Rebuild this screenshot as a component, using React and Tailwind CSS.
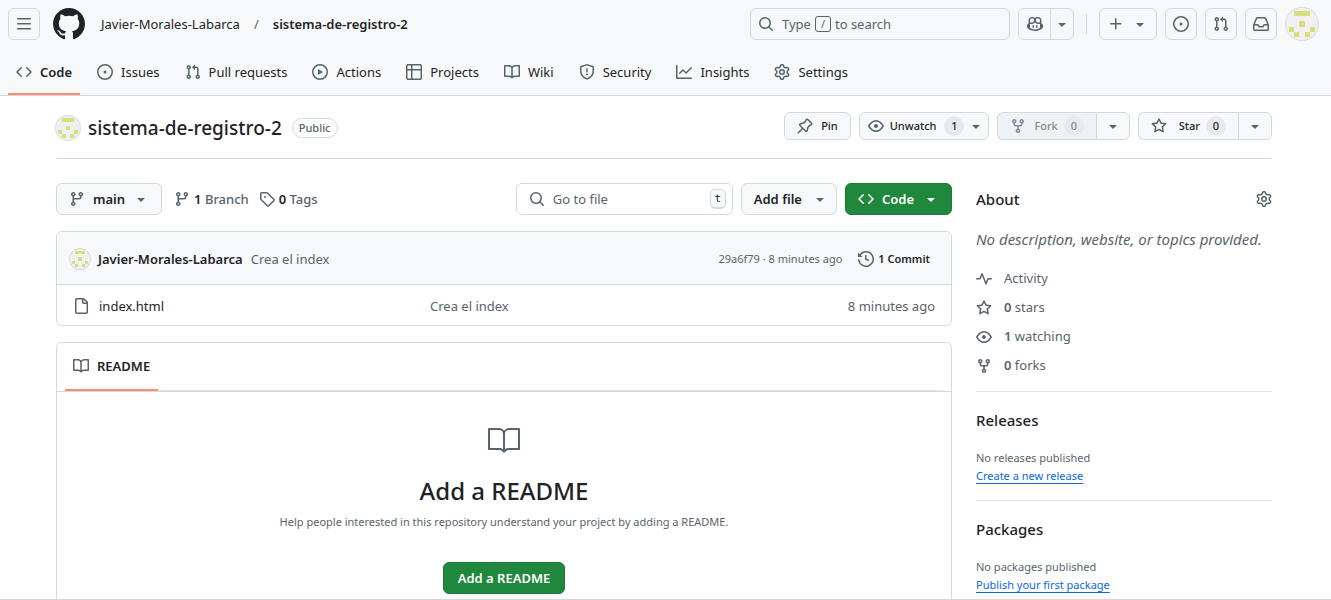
import { GoBook } from "react-icons/go";

const PATHS = {
  bars: "M1 2.75A.75.75 0 0 1 1.75 2h12.5a.75.75 0 0 1 0 1.5H1.75A.75.75 0 0 1 1 2.75Zm0 5A.75.75 0 0 1 1.75 7h12.5a.75.75 0 0 1 0 1.5H1.75A.75.75 0 0 1 1 7.75ZM1.75 12h12.5a.75.75 0 0 1 0 1.5H1.75a.75.75 0 0 1 0-1.5Z",
  github:
    "M8 0c4.42 0 8 3.58 8 8a8.013 8.013 0 0 1-5.45 7.59c-.4.08-.55-.17-.55-.38 0-.27.01-1.13.01-2.2 0-.75-.25-1.23-.54-1.48 1.78-.2 3.65-.88 3.65-3.95 0-.88-.31-1.59-.82-2.15.08-.2.36-1.02-.08-2.12 0 0-.67-.22-2.2.82-.64-.18-1.32-.27-2-.27-.68 0-1.36.09-2 .27-1.53-1.03-2.2-.82-2.2-.82-.44 1.1-.16 1.92-.08 2.12-.51.56-.82 1.28-.82 2.15 0 3.06 1.86 3.75 3.64 3.95-.23.2-.44.55-.51 1.07-.46.21-1.61.55-2.33-.66-.15-.24-.6-.83-1.23-.82-.67.01-.27.38.01.53.34.19.73.9.82 1.13.16.45.68 1.31 2.69.94 0 .67.01 1.3.01 1.49 0 .21-.15.45-.55.38A7.995 7.995 0 0 1 0 8c0-4.42 3.58-8 8-8Z",
  code: "m11.28 3.22 4.25 4.25a.75.75 0 0 1 0 1.06l-4.25 4.25a.749.749 0 0 1-1.275-.326.749.749 0 0 1 .215-.734L13.94 8l-3.72-3.72a.749.749 0 0 1 .326-1.275.749.749 0 0 1 .734.215Zm-6.56 0a.751.751 0 0 1 1.042.018.751.751 0 0 1 .018 1.042L2.06 8l3.72 3.72a.749.749 0 0 1-.326 1.275.749.749 0 0 1-.734-.215L.47 8.53a.75.75 0 0 1 0-1.06Z",
  issue:
    "M8 9.5a1.5 1.5 0 1 0 0-3 1.5 1.5 0 0 0 0 3ZM8 0a8 8 0 1 1 0 16A8 8 0 0 1 8 0ZM1.5 8a6.5 6.5 0 1 0 13 0 6.5 6.5 0 0 0-13 0Z",
  pull: "M1.5 3.25a2.25 2.25 0 1 1 3 2.122v5.256a2.251 2.251 0 1 1-1.5 0V5.372A2.25 2.25 0 0 1 1.5 3.25Zm5.677-.177L9.573.677A.25.25 0 0 1 10 .854V2.5h1A2.5 2.5 0 0 1 13.5 5v5.628a2.251 2.251 0 1 1-1.5 0V5a1 1 0 0 0-1-1h-1v1.646a.25.25 0 0 1-.427.177L7.177 3.427a.25.25 0 0 1 0-.354ZM3.75 2.5a.75.75 0 1 0 0 1.5.75.75 0 0 0 0-1.5Zm0 9.5a.75.75 0 1 0 0 1.5.75.75 0 0 0 0-1.5Zm8.25.75a.75.75 0 1 0 1.5 0 .75.75 0 0 0-1.5 0Z",
  play: "M8 0a8 8 0 1 1 0 16A8 8 0 0 1 8 0ZM1.5 8a6.5 6.5 0 1 0 13 0 6.5 6.5 0 0 0-13 0Zm4.879-2.773 4.264 2.559a.25.25 0 0 1 0 .428l-4.264 2.559A.25.25 0 0 1 6 10.559V5.442a.25.25 0 0 1 .379-.215Z",
  table:
    "M0 1.75C0 .784.784 0 1.75 0h12.5C15.216 0 16 .784 16 1.75v12.5A1.75 1.75 0 0 1 14.25 16H1.75A1.75 1.75 0 0 1 0 14.25ZM6.5 6.5v8h7.75a.25.25 0 0 0 .25-.25V6.5Zm8-1.5V1.75a.25.25 0 0 0-.25-.25H6.5V5Zm-13 1.5v7.75c0 .138.112.25.25.25H5v-8ZM5 5V1.5H1.75a.25.25 0 0 0-.25.25V5Z",
  book: "M0 1.75A.75.75 0 0 1 .75 1h4.253c1.227 0 2.317.59 3 1.501A3.743 3.743 0 0 1 11.006 1h4.245a.75.75 0 0 1 .75.75v10.5a.75.75 0 0 1-.75.75h-4.507a2.25 2.25 0 0 0-1.591.659l-.622.621a.75.75 0 0 1-1.06 0l-.622-.621A2.25 2.25 0 0 0 5.258 13H.75a.75.75 0 0 1-.75-.75Zm7.251 10.324.004-5.073-.002-2.253A2.25 2.25 0 0 0 5.003 2.5H1.5v9h3.757a3.75 3.75 0 0 1 1.994.574ZM8.755 4.75l-.004 7.322a3.752 3.752 0 0 1 1.992-.572H14.5v-9h-3.495a2.25 2.25 0 0 0-2.25 2.25Z",
  shield:
    "M7.467.133a1.748 1.748 0 0 1 1.066 0l5.25 1.68A1.75 1.75 0 0 1 15 3.48V7c0 1.566-.32 3.182-1.303 4.682-.983 1.498-2.585 2.813-5.032 3.855a1.697 1.697 0 0 1-1.33 0c-2.447-1.042-4.049-2.357-5.032-3.855C1.32 10.182 1 8.566 1 7V3.48a1.75 1.75 0 0 1 1.217-1.667Zm.61 1.429a.25.25 0 0 0-.153 0l-5.25 1.68a.25.25 0 0 0-.174.238V7c0 1.358.275 2.666 1.057 3.86.784 1.194 2.121 2.34 4.366 3.297a.196.196 0 0 0 .154 0c2.245-.956 3.582-2.104 4.366-3.298C13.225 9.666 13.5 8.36 13.5 7V3.48a.251.251 0 0 0-.174-.237l-5.25-1.68ZM8.75 4.75v3a.75.75 0 0 1-1.5 0v-3a.75.75 0 0 1 1.5 0ZM9 10.5a1 1 0 1 1-2 0 1 1 0 0 1 2 0Z",
  graph:
    "M1.5 1.75V13.5h13.75a.75.75 0 0 1 0 1.5H.75a.75.75 0 0 1-.75-.75V1.75a.75.75 0 0 1 1.5 0Zm14.28 2.53-5.25 5.25a.75.75 0 0 1-1.06 0L7 7.06 4.28 9.78a.751.751 0 0 1-1.042-.018.751.751 0 0 1-.018-1.042l3.25-3.25a.75.75 0 0 1 1.06 0L10 7.94l4.72-4.72a.751.751 0 0 1 1.042.018.751.751 0 0 1 .018 1.042Z",
  gear: "M8 0a8.2 8.2 0 0 1 .701.031C9.444.095 9.99.645 10.16 1.29l.288 1.107c.018.066.079.158.212.224.231.114.454.243.668.386.123.082.233.09.299.071l1.103-.303c.644-.176 1.392.021 1.82.63.27.385.506.792.704 1.218.315.675.111 1.422-.364 1.891l-.814.806c-.049.048-.098.147-.088.294.016.257.016.515 0 .772-.01.147.038.246.088.294l.814.806c.475.469.679 1.216.364 1.891a7.977 7.977 0 0 1-.704 1.217c-.428.61-1.176.807-1.82.63l-1.102-.302c-.067-.019-.177-.011-.3.071a5.909 5.909 0 0 1-.668.386c-.133.066-.194.158-.211.224l-.29 1.106c-.168.646-.715 1.196-1.458 1.26a8.006 8.006 0 0 1-1.402 0c-.743-.064-1.289-.614-1.458-1.26l-.289-1.106c-.018-.066-.079-.158-.212-.224a5.738 5.738 0 0 1-.668-.386c-.123-.082-.233-.09-.299-.071l-1.103.303c-.644.176-1.392-.021-1.82-.63a8.12 8.12 0 0 1-.704-1.218c-.315-.675-.111-1.422.363-1.891l.815-.806c.05-.048.098-.147.088-.294a6.214 6.214 0 0 1 0-.772c.01-.147-.038-.246-.088-.294l-.815-.806C.635 6.045.431 5.298.746 4.623a7.92 7.92 0 0 1 .704-1.217c.428-.61 1.176-.807 1.82-.63l1.102.302c.067.019.177.011.3-.071.214-.143.437-.272.668-.386.133-.066.194-.158.211-.224l.29-1.106C6.009.645 6.556.095 7.299.03 7.53.01 7.764 0 8 0Zm-.571 1.525c-.036.003-.108.036-.137.146l-.289 1.105c-.147.561-.549.967-.998 1.189-.173.086-.34.183-.5.29-.417.278-.97.423-1.529.27l-1.103-.303c-.109-.03-.175.016-.195.045-.22.312-.412.644-.573.99-.014.031-.021.11.059.19l.815.806c.411.406.562.957.53 1.456a4.709 4.709 0 0 0 0 .582c.032.499-.119 1.05-.53 1.456l-.815.806c-.081.08-.073.159-.059.19.162.346.353.677.573.989.02.03.085.076.195.046l1.102-.303c.56-.153 1.113-.008 1.53.27.161.107.328.204.501.29.447.222.85.629.997 1.189l.289 1.105c.029.109.101.143.137.146a6.6 6.6 0 0 0 1.142 0c.036-.003.108-.036.137-.146l.289-1.105c.147-.561.549-.967.998-1.189.173-.086.34-.183.5-.29.417-.278.97-.423 1.529-.27l1.103.303c.109.029.175-.016.195-.045.22-.313.411-.644.573-.99.014-.031.021-.11-.059-.19l-.815-.806c-.411-.406-.562-.957-.53-1.456a4.709 4.709 0 0 0 0-.582c-.032-.499.119-1.05.53-1.456l.815-.806c.081-.08.073-.159.059-.19a6.464 6.464 0 0 0-.573-.989c-.02-.03-.085-.076-.195-.046l-1.102.303c-.56.153-1.113.008-1.53-.27a4.44 4.44 0 0 0-.501-.29c-.447-.222-.85-.629-.997-1.189l-.289-1.105c-.029-.11-.101-.143-.137-.146a6.6 6.6 0 0 0-1.142 0ZM11 8a3 3 0 1 1-6 0 3 3 0 0 1 6 0ZM9.5 8a1.5 1.5 0 1 0-3.001.001A1.5 1.5 0 0 0 9.5 8Z",
  search:
    "M10.68 11.74a6 6 0 0 1-7.922-8.982 6 6 0 0 1 8.982 7.922l3.04 3.04a.749.749 0 0 1-.326 1.275.749.749 0 0 1-.734-.215ZM11.5 7a4.499 4.499 0 1 0-8.997 0A4.499 4.499 0 0 0 11.5 7Z",
  copilot:
    "M7.998 15.035c-4.562 0-7.873-2.914-7.998-3.749V9.338c.085-.628.677-1.686 1.588-2.065.013-.07.024-.143.036-.218.029-.183.06-.384.126-.612-.201-.508-.254-1.084-.254-1.656 0-.87.128-1.769.693-2.484.579-.733 1.494-1.124 2.724-1.261 1.206-.134 2.262.034 2.944.765.05.053.096.108.139.165.044-.057.094-.112.143-.165.682-.731 1.738-.899 2.944-.765 1.23.137 2.145.528 2.724 1.261.566.715.693 1.614.693 2.484 0 .572-.053 1.148-.254 1.656.066.228.098.429.126.612.012.076.024.148.037.218.924.385 1.522 1.471 1.591 2.095v1.872c0 .766-3.351 3.795-8.002 3.795Zm0-1.485c2.28 0 4.584-1.11 5.002-1.433V7.862l-.023-.116c-.49.21-1.075.291-1.727.291-1.146 0-2.059-.327-2.71-.991A3.222 3.222 0 0 1 8 6.303a3.24 3.24 0 0 1-.544.743c-.65.664-1.563.991-2.71.991-.652 0-1.236-.081-1.727-.291l-.023.116v4.255c.419.323 2.722 1.433 5.002 1.433ZM6.762 2.83c-.193-.206-.637-.413-1.682-.297-1.019.113-1.479.404-1.713.7-.247.312-.369.789-.369 1.554 0 .793.129 1.171.308 1.371.162.181.519.379 1.442.379.853 0 1.339-.235 1.638-.54.315-.322.527-.827.617-1.553.117-.935-.037-1.395-.241-1.614Zm4.155-.297c-1.044-.116-1.488.091-1.681.297-.204.219-.359.679-.242 1.614.091.726.303 1.231.618 1.553.299.305.784.54 1.638.54.922 0 1.28-.198 1.442-.379.179-.2.308-.578.308-1.371 0-.765-.123-1.242-.37-1.554-.233-.296-.693-.587-1.713-.7ZM6.25 9.037a.75.75 0 0 1 .75.75v1.501a.75.75 0 0 1-1.5 0V9.787a.75.75 0 0 1 .75-.75Zm4.25.75v1.501a.75.75 0 0 1-1.5 0V9.787a.75.75 0 0 1 1.5 0Z",
  caret:
    "m4.427 7.427 3.396 3.396a.25.25 0 0 0 .354 0l3.396-3.396A.25.25 0 0 0 11.396 7H4.604a.25.25 0 0 0-.177.427Z",
  plus: "M7.75 2a.75.75 0 0 1 .75.75V7h4.25a.75.75 0 0 1 0 1.5H8.5v4.25a.75.75 0 0 1-1.5 0V8.5H2.75a.75.75 0 0 1 0-1.5H7V2.75A.75.75 0 0 1 7.75 2Z",
  inbox:
    "M2.8 2.06A1.75 1.75 0 0 1 4.41 1h7.18c.7 0 1.333.417 1.61 1.06l2.74 6.395c.04.093.06.194.06.295v4.5A1.75 1.75 0 0 1 14.25 15H1.75A1.75 1.75 0 0 1 0 13.25v-4.5c0-.101.02-.202.06-.295Zm1.61.44a.25.25 0 0 0-.23.152L1.887 8H4.75a.75.75 0 0 1 .6.3L6.625 10h2.75l1.275-1.7a.75.75 0 0 1 .6-.3h2.863L11.82 2.652a.25.25 0 0 0-.23-.152Zm10.09 7h-2.875l-1.275 1.7a.75.75 0 0 1-.6.3h-3.5a.75.75 0 0 1-.6-.3L4.375 9.5H1.5v3.75c0 .138.112.25.25.25h12.5a.25.25 0 0 0 .25-.25Z",
  pin: "m11.294.984 3.722 3.722a1.75 1.75 0 0 1-.504 2.826l-1.327.613a3.089 3.089 0 0 0-1.707 2.084l-.584 2.454c-.317 1.332-1.972 1.8-2.94.832L5.75 11.311 1.78 15.28a.749.749 0 1 1-1.06-1.06l3.969-3.97-2.204-2.204c-.968-.968-.5-2.623.832-2.94l2.454-.584a3.08 3.08 0 0 0 2.084-1.707l.613-1.327a1.75 1.75 0 0 1 2.826-.504ZM6.283 9.723l2.732 2.731a.25.25 0 0 0 .42-.119l.584-2.454a4.586 4.586 0 0 1 2.537-3.098l1.328-.613a.25.25 0 0 0 .072-.404l-3.722-3.722a.25.25 0 0 0-.404.072l-.613 1.328a4.584 4.584 0 0 1-3.098 2.537l-2.454.584a.25.25 0 0 0-.119.42l2.731 2.732Z",
  eye: "M8 2c1.981 0 3.671.992 4.933 2.078 1.27 1.091 2.187 2.345 2.637 3.023a1.62 1.62 0 0 1 0 1.798c-.45.678-1.367 1.932-2.637 3.023C11.67 13.008 9.981 14 8 14c-1.981 0-3.671-.992-4.933-2.078C1.797 10.83.88 9.576.43 8.898a1.62 1.62 0 0 1 0-1.798c.45-.677 1.367-1.931 2.637-3.022C4.33 2.992 6.019 2 8 2ZM1.679 7.932a.12.12 0 0 0 0 .136c.411.622 1.241 1.75 2.366 2.717C5.176 11.758 6.527 12.5 8 12.5c1.473 0 2.825-.742 3.955-1.715 1.124-.967 1.954-2.096 2.366-2.717a.12.12 0 0 0 0-.136c-.412-.621-1.242-1.75-2.366-2.717C10.824 4.242 9.473 3.5 8 3.5c-1.473 0-2.825.742-3.955 1.715-1.124.967-1.954 2.096-2.366 2.717ZM8 10a2 2 0 1 1-.001-3.999A2 2 0 0 1 8 10Z",
  fork: "M5 5.372v.878c0 .414.336.75.75.75h4.5a.75.75 0 0 0 .75-.75v-.878a2.25 2.25 0 1 1 1.5 0v.878a2.25 2.25 0 0 1-2.25 2.25h-1.5v2.128a2.251 2.251 0 1 1-1.5 0V8.5h-1.5A2.25 2.25 0 0 1 3.5 6.25v-.878a2.25 2.25 0 1 1 1.5 0ZM5 3.25a.75.75 0 1 0-1.5 0 .75.75 0 0 0 1.5 0Zm6.75.75a.75.75 0 1 0 0-1.5.75.75 0 0 0 0 1.5Zm-3 8.75a.75.75 0 1 0-1.5 0 .75.75 0 0 0 1.5 0Z",
  star: "M8 .25a.75.75 0 0 1 .673.418l1.882 3.815 4.21.612a.75.75 0 0 1 .416 1.279l-3.046 2.97.719 4.192a.751.751 0 0 1-1.088.791L8 12.347l-3.766 1.98a.75.75 0 0 1-1.088-.79l.72-4.194L.818 6.374a.75.75 0 0 1 .416-1.28l4.21-.611L7.327.668A.75.75 0 0 1 8 .25Zm0 2.445L6.615 5.5a.75.75 0 0 1-.564.41l-3.097.45 2.24 2.184a.75.75 0 0 1 .216.664l-.528 3.084 2.769-1.456a.75.75 0 0 1 .698 0l2.77 1.456-.53-3.084a.75.75 0 0 1 .216-.664l2.24-2.183-3.096-.45a.75.75 0 0 1-.564-.41L8 2.694Z",
  branch:
    "M9.5 3.25a2.25 2.25 0 1 1 3 2.122V6A2.5 2.5 0 0 1 10 8.5H6a1 1 0 0 0-1 1v1.128a2.251 2.251 0 1 1-1.5 0V5.372a2.25 2.25 0 1 1 1.5 0v1.836A2.493 2.493 0 0 1 6 7h4a1 1 0 0 0 1-1v-.628A2.25 2.25 0 0 1 9.5 3.25Zm-6 0a.75.75 0 1 0 1.5 0 .75.75 0 0 0-1.5 0Zm8.25-.75a.75.75 0 1 0 0 1.5.75.75 0 0 0 0-1.5ZM4.25 12a.75.75 0 1 0 0 1.5.75.75 0 0 0 0-1.5Z",
  tag: "M1 7.775V2.75C1 1.784 1.784 1 2.75 1h5.025c.464 0 .91.184 1.238.513l6.25 6.25a1.75 1.75 0 0 1 0 2.474l-5.026 5.026a1.75 1.75 0 0 1-2.474 0l-6.25-6.25A1.752 1.752 0 0 1 1 7.775Zm1.5 0c0 .066.026.13.073.177l6.25 6.25a.25.25 0 0 0 .354 0l5.025-5.025a.25.25 0 0 0 0-.354l-6.25-6.25a.25.25 0 0 0-.177-.073H2.75a.25.25 0 0 0-.25.25ZM6 5a1 1 0 1 1 0 2 1 1 0 0 1 0-2Z",
  history:
    "m.427 1.927 1.215 1.215a8.002 8.002 0 1 1-1.6 5.685.75.75 0 1 1 1.493-.154 6.5 6.5 0 1 0 1.18-4.458l1.358 1.358A.25.25 0 0 1 3.896 6H.25A.25.25 0 0 1 0 5.75V2.104a.25.25 0 0 1 .427-.177ZM7.75 4a.75.75 0 0 1 .75.75v2.992l2.028.812a.75.75 0 0 1-.557 1.392l-2.5-1A.751.751 0 0 1 7 8.25v-3.5A.75.75 0 0 1 7.75 4Z",
  file: "M2 1.75C2 .784 2.784 0 3.75 0h6.586c.464 0 .909.184 1.237.513l2.914 2.914c.329.328.513.773.513 1.237v9.586A1.75 1.75 0 0 1 13.25 16h-9.5A1.75 1.75 0 0 1 2 14.25Zm1.75-.25a.25.25 0 0 0-.25.25v12.5c0 .138.112.25.25.25h9.5a.25.25 0 0 0 .25-.25V6h-2.75A1.75 1.75 0 0 1 9 4.25V1.5Zm6.75.062V4.25c0 .138.112.25.25.25h2.688l-.011-.013-2.914-2.914-.013-.011Z",
  pulse:
    "M6 2c.306 0 .582.187.696.471L10 10.731l1.304-3.26A.751.751 0 0 1 12 7h3.25a.75.75 0 0 1 0 1.5h-2.742l-1.812 4.528a.751.751 0 0 1-1.392 0L6 4.77 4.696 8.03A.75.75 0 0 1 4 8.5H.75a.75.75 0 0 1 0-1.5h2.742l1.812-4.529A.751.751 0 0 1 6 2Z",
};

function Icon({ name, className = "size-4 text-[#59636e]" }) {
  return (
    <svg viewBox="0 0 16 16" fill="currentColor" aria-hidden="true" className={`shrink-0 ${className}`}>
      <path d={PATHS[name]} />
    </svg>
  );
}

function Avatar({ className }) {
  const cells = [[1, 0], [2, 0], [3, 0], [2, 2], [0, 3], [4, 3], [1, 4], [3, 4]];
  return (
    <svg
      viewBox="0 0 12 12"
      shapeRendering="crispEdges"
      aria-hidden="true"
      className={`shrink-0 rounded-full bg-[#f0f0f0] ring-1 ring-[#dadde0] ${className}`}
    >
      {cells.map(([x, y]) => (
        <rect key={`${x}-${y}`} x={x * 2 + 1} y={y * 2 + 1} width="2" height="2" fill="#d8de7c" />
      ))}
    </svg>
  );
}

const headerBox = "flex h-8 items-center justify-center rounded-md border border-[#d1d9e0]";
const smallBtn = "flex h-7 items-center border border-[#d1d9e0] text-[11px] font-medium";

function HeaderButton({ icon, label }) {
  return (
    <button aria-label={label} className={`${headerBox} w-8`}>
      <Icon name={icon} />
    </button>
  );
}

function Counter({ children }) {
  return <span className="flex size-5 items-center justify-center rounded-full bg-[#e7eaed]">{children}</span>;
}

const TABS = [
  ["code", "Code"],
  ["issue", "Issues"],
  ["pull", "Pull requests"],
  ["play", "Actions"],
  ["table", "Projects"],
  ["book", "Wiki"],
  ["shield", "Security"],
  ["graph", "Insights"],
  ["gear", "Settings"],
];

function Header() {
  return (
    <header className="border-b border-[#d1d9e0] bg-[#f6f8fa]">
      <div className="flex items-center pt-2 pr-[13px] pl-2">
        <HeaderButton icon="bars" label="Open menu" />
        <a href="#home" aria-label="Homepage" className="ml-[13px]">
          <Icon name="github" className="size-8 text-[#1f2328]" />
        </a>
        <nav aria-label="Breadcrumb" className="ml-3 flex items-center">
          <a href="#owner" className="px-1">Javier-Morales-Labarca</a>
          <span className="px-2.5 text-[#59636e]">/</span>
          <a href="#repo" className="px-1 font-semibold">sistema-de-registro-2</a>
        </nav>
        <div className="ml-auto flex items-center">
          <button className="flex h-8 w-65 items-center rounded-md border border-[#d1d9e0] px-[7px] text-[#59636e]">
            <Icon name="search" />
            <span className="ml-2">Type</span>
            <kbd className="mx-1 flex size-4 items-center justify-center rounded-[3px] border border-[#59636e] font-[inherit] text-[11px]">/</kbd>
            <span>to search</span>
          </button>
          <div className="ml-2 flex h-8 rounded-md border border-[#d1d9e0]">
            <button aria-label="Chat with Copilot" className="flex w-8 items-center justify-center border-r border-[#d1d9e0]">
              <Icon name="copilot" />
            </button>
            <button aria-label="Open Copilot menu" className="flex w-[22px] items-center justify-center">
              <Icon name="caret" />
            </button>
          </div>
          <div className="mx-3 h-5 w-px bg-[#d1d9e0]" />
          <button aria-label="Create new" className={`${headerBox} w-[58px] gap-2`}>
            <Icon name="plus" />
            <Icon name="caret" />
          </button>
          <div className="ml-2 flex gap-2">
            <HeaderButton icon="issue" label="Issues" />
            <HeaderButton icon="pull" label="Pull requests" />
            <HeaderButton icon="inbox" label="Notifications" />
            <button aria-label="Open user menu" className="ml-px">
              <Avatar className="size-8" />
            </button>
          </div>
        </div>
      </div>
      <nav aria-label="Repository" className="mt-2.5 flex gap-[9px] px-2">
        {TABS.map(([icon, label], i) => (
          <a
            key={label}
            href={`#${icon}`}
            className={`flex h-[45px] items-center gap-2 border-b-2 px-2 ${
              i === 0 ? "border-[#fd8c73] font-semibold" : "border-transparent"
            }`}
          >
            <Icon name={icon} />
            {label}
          </a>
        ))}
      </nav>
    </header>
  );
}

function RepoTitle() {
  return (
    <div className="flex items-start border-b border-[#d1d9e0] pt-4 pb-4">
      <div className="flex items-center pt-0.5">
        <Avatar className="size-6" />
        <h1 className="ml-2 text-[19px] leading-7 font-medium">sistema-de-registro-2</h1>
        <span className="ml-2.5 rounded-full border border-[#d1d9e0] px-1.5 text-[11px] leading-[18px] font-medium text-[#59636e]">
          Public
        </span>
      </div>
      <div className="ml-auto flex gap-2">
        <button className={`${smallBtn} gap-2 rounded-md bg-[#f6f8fa] px-3`}>
          <Icon name="pin" />
          Pin
        </button>
        <button className={`${smallBtn} rounded-md bg-[#f6f8fa] pr-1 pl-2`}>
          <Icon name="eye" />
          <span className="mr-2 ml-1.5">Unwatch</span>
          <Counter>1</Counter>
          <Icon name="caret" className="ml-1 size-4 text-[#59636e]" />
        </button>
        <div className="flex">
          <button disabled className={`${smallBtn} rounded-l-md border-r-0 bg-[#eff2f5] px-3 text-[#818b98]`}>
            <Icon name="fork" className="size-4 text-[#818b98]" />
            <span className="mr-1.5 ml-2">Fork</span>
            <Counter>0</Counter>
          </button>
          <button aria-label="See your forks" className={`${smallBtn} w-[34px] justify-center rounded-r-md bg-[#f6f8fa]`}>
            <Icon name="caret" />
          </button>
        </div>
        <div className="flex">
          <button className={`${smallBtn} rounded-l-md border-r-0 bg-[#f6f8fa] px-3`}>
            <Icon name="star" />
            <span className="mr-1.5 ml-3">Star</span>
            <Counter>0</Counter>
          </button>
          <button aria-label="Add to list" className={`${smallBtn} w-[34px] justify-center rounded-r-md bg-[#f6f8fa]`}>
            <Icon name="caret" />
          </button>
        </div>
      </div>
    </div>
  );
}

function Toolbar() {
  return (
    <div className="flex items-center">
      <button className="flex h-8 items-center rounded-md border border-[#d1d9e0] bg-[#f6f8fa] px-3 font-semibold">
        <Icon name="branch" />
        <span className="mx-2">main</span>
        <Icon name="caret" />
      </button>
      <a href="#branches" className="ml-3 flex items-center gap-1 font-medium text-[#59636e]">
        <Icon name="branch" />
        <span><b className="font-semibold text-[#1f2328]">1</b> Branch</span>
      </a>
      <a href="#tags" className="ml-2.5 flex items-center gap-1 font-medium text-[#59636e]">
        <Icon name="tag" />
        <span><b className="font-semibold text-[#1f2328]">0</b> Tags</span>
      </a>
      <div className="ml-auto flex gap-2">
        <label className="flex h-8 w-[217px] items-center rounded-md border border-[#d1d9e0] bg-white pr-1.5 pl-3">
          <Icon name="search" />
          <input
            aria-label="Go to file"
            placeholder="Go to file"
            className="ml-2 min-w-0 flex-1 bg-transparent outline-none placeholder:text-[#59636e]"
          />
          <kbd className="flex h-5 w-4 items-center justify-center rounded-[5px] border border-b-2 border-[#d1d9e0] bg-[#f6f8fa] font-['DejaVu_Sans_Mono',monospace] text-[11px]">
            t
          </kbd>
        </label>
        <button className="flex h-8 items-center rounded-md border border-[#d1d9e0] bg-[#f6f8fa] pr-2 pl-3 font-semibold">
          <span className="mr-2.5">Add file</span>
          <Icon name="caret" />
        </button>
        <button className="flex h-8 items-center rounded-md border border-[#1c7b36] bg-[#1f883d] px-3 font-semibold text-white">
          <Icon name="code" className="size-4" />
          <span className="mr-[9px] ml-2">Code</span>
          <Icon name="caret" className="size-4" />
        </button>
      </div>
    </div>
  );
}

function Files() {
  return (
    <section className="mt-4 overflow-hidden rounded-md border border-[#d1d9e0]">
      <div className="flex h-[53px] items-center border-b border-[#d1d9e0] bg-[#f6f8fa] pt-px pr-[21px] pl-[13px]">
        <Avatar className="size-5" />
        <a href="#owner" className="ml-2 font-semibold">Javier-Morales-Labarca</a>
        <a href="#commit" className="ml-2 text-[#59636e]">Crea el index</a>
        <span className="ml-auto text-[11px] text-[#59636e]">29a6f79 · 8 minutes ago</span>
        <a href="#commits" className="ml-4 flex items-center gap-1 text-[11px] font-semibold">
          <Icon name="history" />1 Commit
        </a>
      </div>
      <table className="w-full table-fixed">
        <tbody>
          <tr className="h-10">
            <td className="w-[357px] pt-px pl-4">
              <a href="#file" className="flex items-center gap-2.5">
                <Icon name="file" />
                index.html
              </a>
            </td>
            <td className="pt-px pl-4 text-[#59636e]">Crea el index</td>
            <td className="w-34 pt-px pr-4 text-right text-[#59636e]">8 minutes ago</td>
          </tr>
        </tbody>
      </table>
    </section>
  );
}

function Readme() {
  return (
    <section className="mt-4 rounded-t-md border border-b-0 border-[#d1d9e0]">
      <div className="border-b border-[#d1d9e0] px-2">
        <div className="flex shadow-[inset_0_-1px_0_#dfe4e9]">
          <a href="#readme" className="flex h-12 items-center gap-2 border-b-2 border-[#fd8c73] px-2 font-semibold">
            <Icon name="book" />
            README
          </a>
        </div>
      </div>
      <div className="flex flex-col items-center px-8 pt-8 pb-10 text-center">
        <GoBook className="size-8 text-[#59636e]" />
        <h2 className="mt-[19px] text-2xl leading-8 font-medium">Add a README</h2>
        <p className="mt-[5px] text-[11px] leading-5 text-[#59636e]">
          Help people interested in this repository understand your project by adding a README.
        </p>
        <button className="mt-[30px] h-8 rounded-md border border-[#1c7b36] bg-[#1f883d] px-3.5 font-semibold text-white">
          Add a README
        </button>
      </div>
    </section>
  );
}

function SideBlock({ title, text, link }) {
  return (
    <section className="border-b border-[#dfe4e9] pt-4 pb-[15px]">
      <h2 className="text-[15px] leading-6 font-medium">{title}</h2>
      <p className="mt-[17px] text-[11px] leading-[18px] text-[#59636e]">{text}</p>
      <a href={`#${title}`} className="block text-[11px] leading-[18px] text-[#0969da] underline underline-offset-3">{link}</a>
    </section>
  );
}

function Sidebar() {
  const stats = [
    ["pulse", "", "Activity"],
    ["star", "0", "stars"],
    ["eye", "1", "watching"],
    ["fork", "0", "forks"],
  ];
  return (
    <aside className="w-74 shrink-0">
      <section className="border-b border-[#dfe4e9] pt-1 pb-[15px]">
        <div className="flex items-center justify-between">
          <h2 className="text-[15px] leading-6 font-medium">About</h2>
          <button aria-label="Edit repository metadata">
            <Icon name="gear" />
          </button>
        </div>
        <p className="mt-4 text-[15px] leading-6 text-[#59636e] italic">
          No description, website, or topics provided.
        </p>
        <ul className="mt-[17px] flex flex-col gap-2">
          {stats.map(([icon, count, label]) => (
            <li key={label}>
              <a href={`#${label}`} className="flex items-center leading-[21px] text-[#59636e]">
                <Icon name={icon} />
                <span className="ml-3">
                  {count && <b className="font-semibold">{count} </b>}
                  {label}
                </span>
              </a>
            </li>
          ))}
        </ul>
      </section>
      <SideBlock title="Releases" text="No releases published" link="Create a new release" />
      <SideBlock title="Packages" text="No packages published" link="Publish your first package" />
    </aside>
  );
}

export default function App() {
  return (
    <div className="h-screen overflow-hidden border-b border-[#d4d6d8] bg-white font-['Noto_Sans',sans-serif] text-[13px] leading-5 text-[#1f2328]">
      <Header />
      <div className="pr-[3px]">
        <main className="mx-auto max-w-[1280px] px-8">
          <RepoTitle />
          <div className="mt-6 flex gap-6">
            <div className="min-w-0 flex-1">
              <Toolbar />
              <Files />
              <Readme />
            </div>
            <Sidebar />
          </div>
        </main>
      </div>
    </div>
  );
}
